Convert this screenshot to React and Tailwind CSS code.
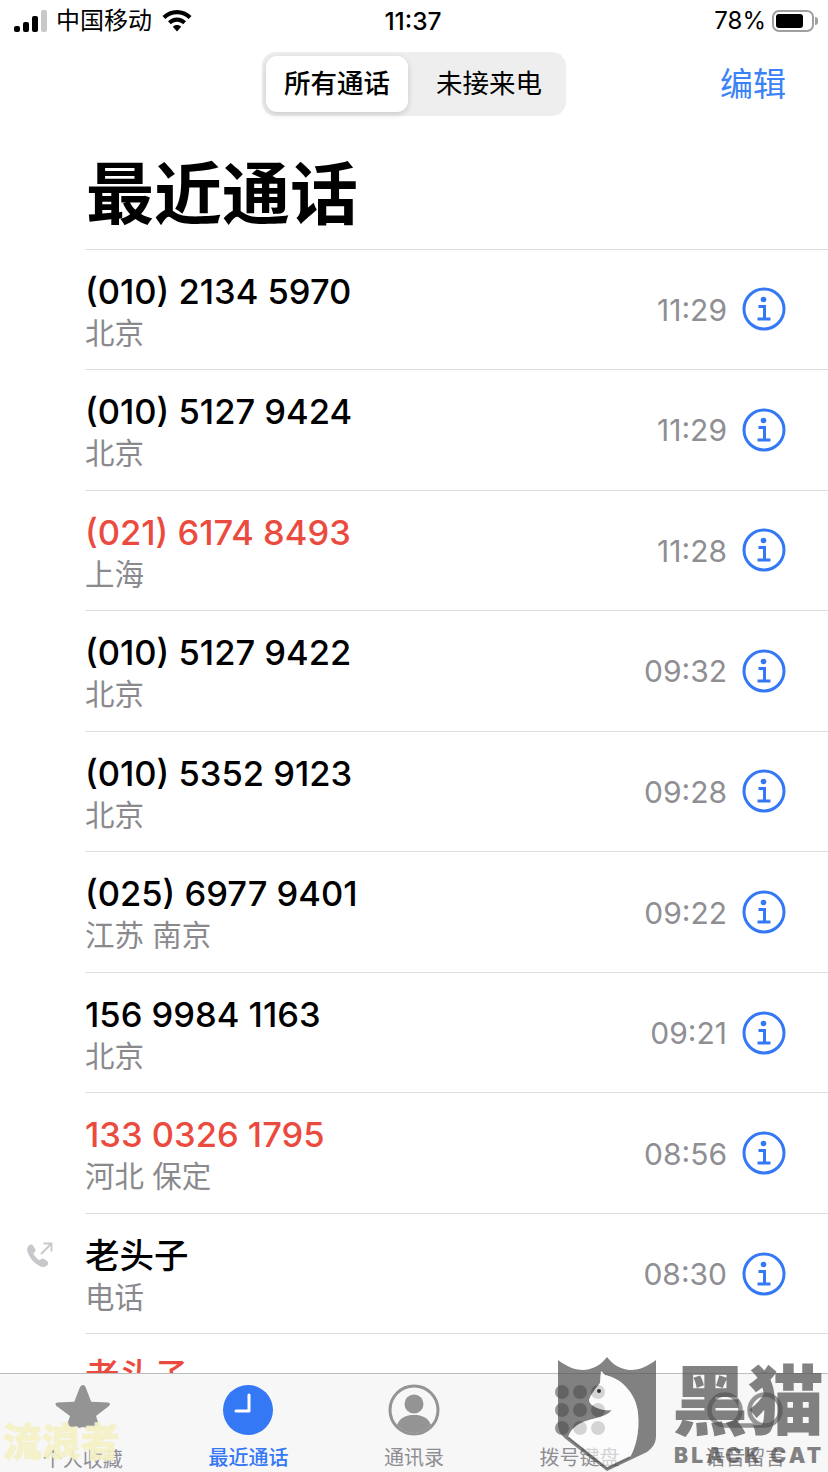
const FONT = "font-['Inter','Noto_Sans_CJK_SC',sans-serif]";

const calls = [
  { name: '(010) 2134 5970', place: '北京', time: '11:29' },
  { name: '(010) 5127 9424', place: '北京', time: '11:29' },
  { name: '(021) 6174 8493', place: '上海', time: '11:28', missed: true },
  { name: '(010) 5127 9422', place: '北京', time: '09:32' },
  { name: '(010) 5352 9123', place: '北京', time: '09:28' },
  { name: '(025) 6977 9401', place: '江苏 南京', time: '09:22' },
  { name: '156 9984 1163', place: '北京', time: '09:21' },
  { name: '133 0326 1795', place: '河北 保定', time: '08:56', missed: true },
  { name: '老头子', place: '电话', time: '08:30', outgoing: true },
  { name: '老头子', place: '电话', time: '08:12', missed: true },
];

const InfoIcon = () => (
  <svg width="44" height="44" viewBox="0 0 44 44" fill="none" stroke="#3478f6">
    <circle cx="22" cy="22" r="20" strokeWidth="3" />
    <circle cx="21.500" cy="12.500" r="2.800" fill="#3478f6" stroke="none" />
    <path d="M16.500 19.500h6v12M15.500 32h13" strokeWidth="3" />
  </svg>
);

const OutgoingIcon = () => (
  <svg width="28" height="28" viewBox="0 0 28 28" fill="#c7c7cc">
    <path d="M3 3.500c1.500-1.300 3.400-1.200 4.200.2l2 3.400c.6 1 .4 2-.4 2.800l-1.400 1.300c.9 2.700 3.400 5.500 6.300 7l1.600-1.300c.9-.7 2-.7 2.900 0l3.100 2.300c1.300 1 1.200 2.800-.1 4-2 1.900-4.400 2.200-7 1.100C8 21.500 2.500 14.500 1.300 9 .8 6.800 1.500 4.800 3 3.500z" />
    <path d="M15 12 25 2M17.500 1.500H25.500V9.500" fill="none" stroke="#c7c7cc" strokeWidth="1.800" />
  </svg>
);

const Row = ({ call }) => (
  <div className="relative h-[120.55px] shrink-0 pl-[85px]">
    {call.outgoing && (
      <div className="absolute left-[26px] top-[28px]">
        <OutgoingIcon />
      </div>
    )}
    <div className="flex h-full items-center border-b border-[#dedee0] pr-[42px]">
      <div className="flex-1 self-start pt-[20px]">
        <div className={`text-[34.500px] font-medium leading-[43px] ${call.missed ? 'text-[#eb4b3e]' : 'text-black'}`}>
          {call.name}
        </div>
        <div className="text-[29.500px] leading-[40px] text-[#8a8a8e]">{call.place}</div>
      </div>
      <div className="mr-[15px] mt-[2px] text-[30px] text-[#8e8e93]">{call.time}</div>
      <InfoIcon />
    </div>
  </div>
);

const StatusBar = () => (
  <div className="flex h-[42px] items-center justify-between pl-[14px] pr-[10px]">
    <div className="flex w-[300px] items-center">
      <div className="flex items-end gap-[3px]">
        <div className="h-[6px] w-[6px] rounded-[2px] bg-black" />
        <div className="h-[10px] w-[6px] rounded-[2px] bg-black" />
        <div className="h-[16px] w-[6px] rounded-[2px] bg-black" />
        <div className="h-[22px] w-[6px] rounded-[2px] bg-[#c8c8c8]" />
      </div>
      <span className="ml-[9px] text-[24px] text-black">中国移动</span>
      <svg className="ml-[10px]" width="30" height="22" viewBox="0 0 30 22" fill="black">
        <path d="M15 0C9.500 0 4.500 2.200.5 6l2.800 3C6.400 6 10.500 4.200 15 4.200S23.600 6 26.700 9l2.800-3C25.500 2.200 20.500 0 15 0z" />
        <path d="M15 7.500c-3.400 0-6.600 1.400-9 3.700l2.800 3c1.700-1.500 3.900-2.500 6.200-2.500s4.500 1 6.200 2.500l2.800-3c-2.400-2.300-5.600-3.700-9-3.700z" />
        <path d="M15 15c-1.700 0-3.100.6-4.200 1.700L15 21.500l4.200-4.800C18.100 15.600 16.700 15 15 15z" />
      </svg>
    </div>
    <div className="mr-[6px] text-[24.500px] font-medium text-black">11:37</div>
    <div className="flex w-[300px] items-center justify-end">
      <span className="mr-[6px] text-[24px] text-black">78%</span>
      <div className="flex h-[22px] w-[42px] items-center rounded-[7px] border-2 border-[#a0a0a0] p-[2px]">
        <div className="h-full w-[78%] rounded-[3px] bg-black" />
      </div>
      <div className="ml-[1px] h-[8px] w-[3px] rounded-r-full bg-[#a0a0a0]" />
    </div>
  </div>
);

const NavBar = () => (
  <div className="relative mt-[10px] flex h-[64px] justify-center">
    <div className="flex h-[64px] w-[304px] rounded-[14px] bg-[#eeeeef] p-[4px]">
      <div className="flex w-[142px] items-center justify-center rounded-[11px] bg-white text-[26.500px] font-medium text-black shadow-[0_2px_6px_rgba(0,0,0,0.16)]">
        所有通话
      </div>
      <div className="flex flex-1 items-center justify-center pl-[8px] text-[26.500px] text-black">未接来电</div>
    </div>
    <div className="absolute right-[42px] top-[10px] text-[33px] leading-[44px] text-[#3b82f6]">编辑</div>
  </div>
);

const StarIcon = () => (
  <svg width="56" height="56" viewBox="0 0 56 56" fill="#949494">
    <path d="M28 2c1.400 0 2.200 1 2.700 2.500l5.500 14.300 16.500.7c2.400.1 3.100 2 1.300 3.400L41 33l3 9-6 3-3-2-3 2-4-1-4 1-3-2-3 2-6-3 3-9L1.500 22.900C-.3 21.500.4 19.600 2.800 19.500l16.500-.7 5.500-14.300C25.800 3 26.600 2 28 2z" />
  </svg>
);

const ClockIcon = () => (
  <svg width="50" height="50" viewBox="0 0 50 50">
    <circle cx="25" cy="25" r="25" fill="#3478f6" />
    <path d="M26 10v16H13" fill="none" stroke="white" strokeWidth="3" strokeLinecap="round" strokeLinejoin="round" />
  </svg>
);

const ContactIcon = () => (
  <svg width="52" height="52" viewBox="0 0 52 52" fill="#949494">
    <circle cx="26" cy="26" r="24" fill="none" stroke="#949494" strokeWidth="3" />
    <circle cx="26" cy="20" r="9.500" />
    <path d="M9 41c3-7.500 9-10 17-10s14 2.500 17 10c-4.500 5-10.500 8-17 8S13.500 46 9 41z" />
  </svg>
);

const KeypadIcon = () => (
  <div className="grid grid-cols-3 gap-[4px]">
    {[1, 2, 3, 4, 5, 6, 7, 8, 9].map((n) => (
      <div key={n} className="h-[14px] w-[14px] rounded-full bg-[#949494]" />
    ))}
  </div>
);

const VoicemailIcon = () => (
  <svg width="76" height="36" viewBox="0 0 76 36" fill="none" stroke="#949494" strokeWidth="4.500">
    <circle cx="18" cy="18" r="15.500" />
    <circle cx="58" cy="18" r="15.500" />
    <path d="M18 33.500h40" />
  </svg>
);

const Tab = ({ icon, label, active }) => (
  <div className="flex w-[165.600px] flex-col items-center">
    <div className="flex h-[58px] items-center justify-center">{icon}</div>
    <div className={`mt-[7px] text-[20px] leading-[28px] ${active ? 'font-medium text-[#3478f6]' : 'text-[#8e8e93]'}`}>
      {label}
    </div>
  </div>
);

const TabBar = () => (
  <div className="z-10 flex h-[99px] shrink-0 border-t border-[#bdbdbf] bg-[#f7f7f8] pt-[9px]">
    <Tab icon={<StarIcon />} label="个人收藏" />
    <Tab icon={<ClockIcon />} label="最近通话" active />
    <Tab icon={<ContactIcon />} label="通讯录" />
    <Tab icon={<KeypadIcon />} label="拨号键盘" />
    <Tab icon={<VoicemailIcon />} label="语音留言" />
  </div>
);

// watermarks sit over the tab bar
const Watermarks = () => (
  <>
    <div className="absolute left-[3px] top-[1419px] z-20 text-[39px] font-black leading-[46px] text-[#f5f1c6]/95 [-webkit-text-stroke:0.6px_#f5f1c6]">流浪者</div>
    <svg className="absolute left-[558px] top-[1357px] z-20" width="100" height="115" viewBox="0 0 100 115">
      <path
        fillRule="evenodd"
        d="M0 3c8 6 16 10 25 10 9 0 18-5 24-13 6 8 15 13 24 13 9 0 17-4 25-10v76c0 8-4 12-9 16L49 114 9 83C3 78 0 74 0 68zM43 14l4 4c16 3 31 18 33 38 2 20-3 36-8 44L49 111 10 80c3-8 8-12 15-15 10-4 22-4 29-12-8 1-15-1-20-5-2-2-3-3-3-5 2-6 7-12 11-17z"
        fill="#504e4f"
        fillOpacity="0.7"
      />
      <path
        d="M43 14l4 4c16 3 31 18 33 38 2 20-3 36-8 44L49 111 10 80c3-8 8-12 15-15 10-4 22-4 29-12-8 1-15-1-20-5-2-2-3-3-3-5 2-6 7-12 11-17z"
        fill="white"
        fillOpacity="0.6"
      />
      <path d="M10 80l39 31 23-11" fill="none" stroke="#504e4f" strokeOpacity="0.7" strokeWidth="1.500" />
      <circle cx="41" cy="34" r="2" fill="#333" />
    </svg>
    <div className="absolute left-[672px] top-[1356px] z-20 text-[76px] font-black leading-[90px] text-[#4f4d4e]/70">黑猫</div>
    <div className="absolute left-[674px] top-[1443px] z-20 whitespace-nowrap text-[21px] font-black leading-[26px] tracking-[3.200px] text-[#4f4d4e]/70">BLACK CAT</div>
  </>
);

export default function App() {
  return (
    <div className={`relative flex h-[1472px] w-[828px] flex-col overflow-hidden bg-white ${FONT}`}>
      <StatusBar />
      <NavBar />
      <div className="ml-[86px] mt-[36px] h-[96.500px] text-[68px] font-semibold leading-[84px] text-black">最近通话</div>
      <div className="ml-[85px] border-b border-[#dedee0]" />
      <div className="flex min-h-0 flex-1 flex-col overflow-hidden">
        {calls.map((call, i) => (
          <Row key={i} call={call} />
        ))}
      </div>
      <TabBar />
      <Watermarks />
    </div>
  );
}
